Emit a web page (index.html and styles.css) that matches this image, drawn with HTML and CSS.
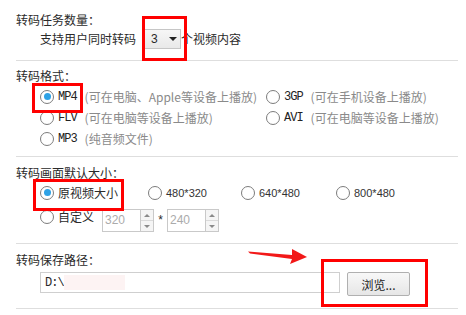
FILE: index.html
```html
<!DOCTYPE html>
<html lang="zh-CN">
<head>
    <meta charset="UTF-8">
    <meta name="viewport" content="width=device-width, initial-scale=1.0">
    <title>转码设置</title>
    <link rel="stylesheet" href="styles.css">
</head>
<body>
    <div class="panel">
        <section class="group group-task">
            <div class="group-title">转码任务数量：</div>
            <div class="row task-row">
                <span>支持用户同时转码</span>
                <div class="select">
                    <span class="select-value">3</span>
                    <span class="select-arrow"></span>
                </div>
                <span>个视频内容</span>
            </div>
        </section>

        <section class="group group-format">
            <div class="group-title">转码格式：</div>
            <div class="format-grid">
                <label class="radio checked"><span class="dot"></span><span class="fmt">MP4</span><span class="desc">(可在电脑、Apple等设备上播放)</span></label>
                <label class="radio"><span class="dot"></span><span class="fmt">3GP</span><span class="desc">(可在手机设备上播放)</span></label>
                <label class="radio"><span class="dot"></span><span class="fmt">FLV</span><span class="desc">(可在电脑等设备上播放)</span></label>
                <label class="radio"><span class="dot"></span><span class="fmt">AVI</span><span class="desc">(可在电脑等设备上播放)</span></label>
                <label class="radio"><span class="dot"></span><span class="fmt">MP3</span><span class="desc">(纯音频文件)</span></label>
            </div>
        </section>

        <section class="group group-size">
            <div class="group-title">转码画面默认大小：</div>
            <div class="size-grid">
                <label class="radio checked"><span class="dot"></span><span>原视频大小</span></label>
                <label class="radio"><span class="dot"></span><span class="num">480*320</span></label>
                <label class="radio"><span class="dot"></span><span class="num">640*480</span></label>
                <label class="radio"><span class="dot"></span><span class="num">800*480</span></label>
            </div>
            <div class="row custom-row">
                <label class="radio custom-radio"><span class="dot"></span><span>自定义</span></label>
                <div class="spin">
                    <span class="spin-val">320</span>
                    <span class="spin-btns"><span class="spin-up"></span><span class="spin-down"></span></span>
                </div>
                <span class="times">*</span>
                <div class="spin">
                    <span class="spin-val">240</span>
                    <span class="spin-btns"><span class="spin-up"></span><span class="spin-down"></span></span>
                </div>
            </div>
        </section>

        <section class="group group-path">
            <div class="group-title">转码保存路径：</div>
            <div class="row path-row">
                <div class="path-input"><span class="path-text">D:\</span><span class="path-blur"></span></div>
                <button type="button" class="browse">浏览...</button>
            </div>
        </section>
    </div>

    <!-- пометки поверх скриншота -->
    <div class="mark mark-task"></div>
    <div class="mark mark-mp4"></div>
    <div class="mark mark-size"></div>
    <div class="mark mark-browse"></div>

    <svg class="arrow" width="64" height="20" viewBox="0 0 64 20">
        <polygon points="2,5.5 46,9 46,3 61,11 44,18 46,13 4,7.5" fill="#f21818"/>
    </svg>
</body>
</html>
```

FILE: styles.css
```css
body {
    margin: 0;
    background-color: #fff;
    font-family: "Noto Sans CJK SC", sans-serif;
    font-size: 12px;
    line-height: 16px;
    color: #2a2a2a;
}
.panel {
    margin-left: 16px;
    width: 442px;
}
.group {
    border-bottom: 1px solid #dedede;
}
.group-title {
    height: 16px;
}
.row {
    display: flex;
    align-items: center;
}

/* количество задач */
.group-task {
    padding: 12px 0 11px;
}
.task-row {
    margin-top: 1px;
    height: 20px;
    padding-left: 24px;
}
.select {
    display: flex;
    align-items: center;
    box-sizing: border-box;
    width: 37px;
    height: 20px;
    margin-left: 8px;
    border: 1px solid #c6c6c6;
    background: linear-gradient(#f6f6f6, #e9e9e9);
    font-family: "Liberation Sans", sans-serif;
}
.select-value {
    margin-left: 6px;
    width: 18px;
}
.select-arrow {
    width: 0;
    height: 0;
    border-left: 4px solid transparent;
    border-right: 4px solid transparent;
    border-top: 4px solid #222;
}

/* радио-кнопки */
.radio {
    display: flex;
    align-items: center;
    white-space: nowrap;
}
.dot {
    display: flex;
    align-items: center;
    justify-content: center;
    box-sizing: border-box;
    width: 14px;
    height: 14px;
    margin-right: 4px;
    border: 1px solid #7c7c7c;
    border-radius: 50%;
    background-color: #fff;
}
.checked .dot::after {
    content: "";
    width: 7px;
    height: 7px;
    border-radius: 50%;
    background-color: #2ea2e6;
}

/* формат */
.group-format {
    padding: 7px 0 7px;
}
.format-grid {
    display: grid;
    grid-template-columns: 226px auto;
    grid-auto-rows: 21px;
    margin-top: 2px;
    padding-left: 24px;
}
.fmt {
    font-family: "Liberation Mono", monospace;
    letter-spacing: -1px;
    color: #222;
}
.desc {
    margin-left: 8px;
    color: #8a8a8a;
}

/* размер */
.group-size {
    padding: 8px 0 11px;
}
.size-grid {
    display: grid;
    grid-template-columns: 108px 93px 95px auto;
    height: 21px;
    margin-top: 1px;
    padding-left: 24px;
}
.num {
    font-family: "Liberation Sans", sans-serif;
    font-size: 11px;
    color: #333;
}
.custom-row {
    margin-top: 6px;
    height: 23px;
    padding-left: 24px;
    align-items: flex-start;
}
.custom-radio {
    height: 16px;
}
.spin {
    display: flex;
    box-sizing: border-box;
    width: 52px;
    height: 23px;
    border: 1px solid #c9c9c9;
}
.custom-radio + .spin {
    margin-left: 8px;
}
.spin-val {
    width: 35px;
    padding-left: 2px;
    line-height: 21px;
    font-family: "Liberation Sans", sans-serif;
    color: #ababab;
}
.spin-btns {
    display: flex;
    flex-direction: column;
    flex: 1;
    border-left: 1px solid #c9c9c9;
    background-color: #f5f5f5;
}
.spin-up, .spin-down {
    flex: 1;
    display: flex;
    align-items: center;
    justify-content: center;
}
.spin-down {
    border-top: 1px solid #dadada;
}
.spin-up::after {
    content: "";
    border-left: 3px solid transparent;
    border-right: 3px solid transparent;
    border-bottom: 3px solid #8a8a8a;
}
.spin-down::after {
    content: "";
    border-left: 3px solid transparent;
    border-right: 3px solid transparent;
    border-top: 3px solid #8a8a8a;
}
.times {
    width: 13px;
    text-align: center;
    line-height: 23px;
    font-family: "Liberation Sans", sans-serif;
}

/* путь */
.group-path {
    padding: 8px 0 12px;
}
.path-row {
    margin-top: 4px;
    height: 24px;
    padding-left: 24px;
    align-items: flex-start;
}
.path-input {
    display: flex;
    align-items: center;
    box-sizing: border-box;
    width: 300px;
    height: 21px;
    padding-left: 4px;
    border: 1px solid #cfcfcf;
}
.path-text {
    font-family: "Liberation Mono", monospace;
    letter-spacing: -1px;
}
.path-blur {
    width: 61px;
    height: 15px;
    background-color: #fdf3f3;
}
.browse {
    box-sizing: border-box;
    width: 63px;
    height: 24px;
    margin-left: 7px;
    padding: 0;
    border: 1px solid #b0b0b0;
    border-radius: 2px;
    background: linear-gradient(#f8f8f8, #e6e6e6);
    font-family: "Noto Sans CJK SC", sans-serif;
    font-size: 12px;
    color: #222;
}

/* красные рамки и стрелка */
.mark {
    position: absolute;
    box-sizing: border-box;
    border: 3px solid #f00;
}
.mark-task {
    left: 142px;
    top: 16px;
    width: 45px;
    height: 45px;
}
.mark-mp4 {
    left: 32px;
    top: 83px;
    width: 51px;
    height: 30px;
}
.mark-size {
    left: 33px;
    top: 179px;
    width: 91px;
    height: 32px;
}
.mark-browse {
    left: 321px;
    top: 259px;
    width: 107px;
    height: 48px;
}
.arrow {
    position: absolute;
    left: 246px;
    top: 246px;
}
```
